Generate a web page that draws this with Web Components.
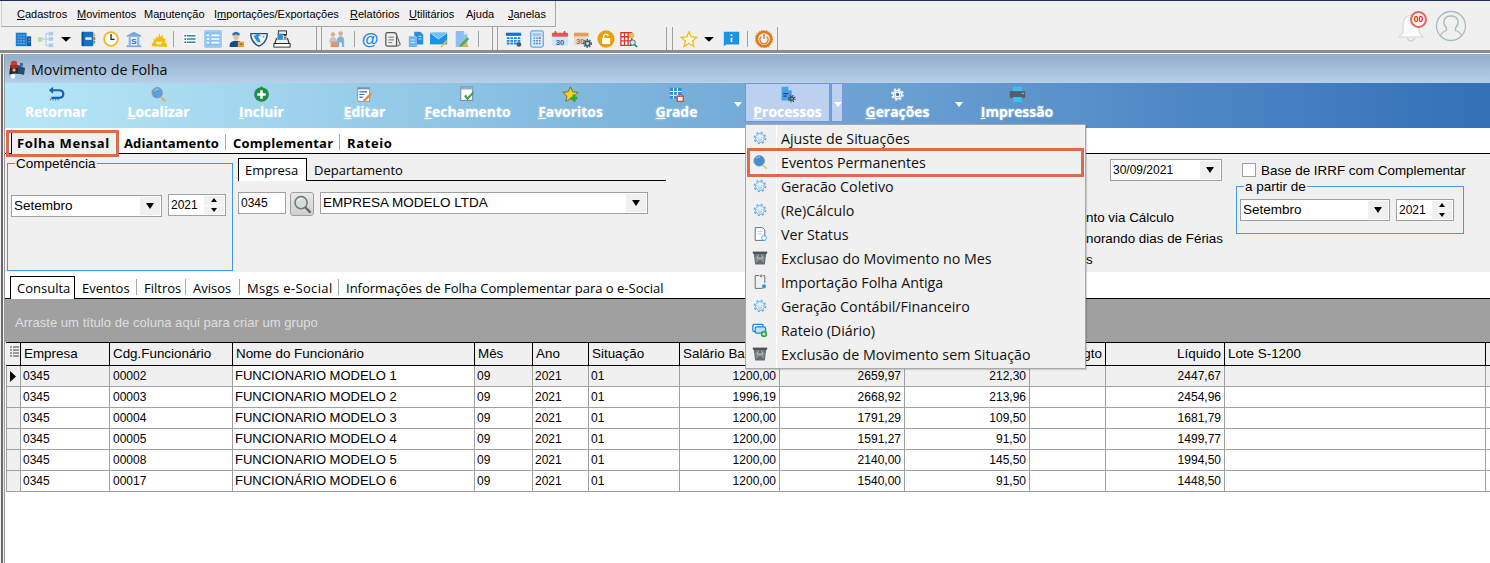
<!DOCTYPE html>
<html lang="pt-BR">
<head>
<meta charset="utf-8">
<title>Movimento de Folha</title>
<style>
  html, body { margin: 0; height: 100%; overflow: hidden; background: #f0f0f0; }
  body { font-family: "Liberation Sans", Arial, sans-serif; font-size: 12px; color: #000; }
</style>
</head>
<body>
<erp-app>
  <menu-bar>
    <menu-entry width="60" start="17"><u>C</u>adastros</menu-entry>
    <menu-entry width="67"><u>M</u>ovimentos</menu-entry>
    <menu-entry width="70">Ma<u>n</u>utenção</menu-entry>
    <menu-entry width="136">I<u>m</u>portações/Exportações</menu-entry>
    <menu-entry width="59"><u>R</u>elatórios</menu-entry>
    <menu-entry width="57"><u>U</u>tilitários</menu-entry>
    <menu-entry width="42">A<u>j</u>uda</menu-entry>
    <menu-entry width="47"><u>J</u>anelas</menu-entry>
  </menu-bar>
  <tool-bar></tool-bar>
  <div style="height:3px;background:#8c8c8c;border-bottom:1px solid #fff"></div>
  <app-window heading="Movimento de Folha">
    <rib-bon></rib-bon>
    <tab-strip kind="page">
      <tab-item width="108" pad="5" active><span style="font-weight:bold;letter-spacing:.6px">Folha Mensal</span></tab-item>
      <tab-item width="107" pad="5"><span style="font-weight:bold;letter-spacing:.1px">Adiantamento</span></tab-item>
      <tab-item width="114" pad="7"><span style="font-weight:bold;letter-spacing:.25px">Complementar</span></tab-item>
      <tab-item width="60" pad="7" last><span style="font-weight:bold;letter-spacing:.6px">Rateio</span></tab-item>
    </tab-strip>
    <folha-form></folha-form>
    <tab-strip kind="sub">
      <tab-item width="65" active>Consulta</tab-item>
      <tab-item width="62" pad="7">Eventos</tab-item>
      <tab-item width="49" pad="7">Filtros</tab-item>
      <tab-item width="54" pad="7">Avisos</tab-item>
      <tab-item width="99" pad="7"><span style="letter-spacing:.35px">Msgs e-Social</span></tab-item>
      <tab-item width="329" pad="7" last>Informações de Folha Complementar para o e-Social</tab-item>
    </tab-strip>
    <group-band>Arraste um título de coluna aqui para criar um grupo</group-band>
    <data-grid></data-grid>
  </app-window>
  <drop-menu>
    <menu-row icon="gear">Ajuste de Situações</menu-row>
    <menu-row icon="lens" marked>Eventos Permanentes</menu-row>
    <menu-row icon="gear">Geracão Coletivo</menu-row>
    <menu-row icon="gear">(Re)Cálculo</menu-row>
    <menu-row icon="status">Ver Status</menu-row>
    <menu-row icon="trash">Exclusao do Movimento no Mes</menu-row>
    <menu-row icon="import">Importação Folha Antiga</menu-row>
    <menu-row icon="gear">Geração Contábil/Financeiro</menu-row>
    <menu-row icon="rateio">Rateio (Diário)</menu-row>
    <menu-row icon="trash">Exclusão de Movimento sem Situação</menu-row>
  </drop-menu>
</erp-app>

<script>
const gearPath = `<circle cx="10" cy="10" r="5.4" fill="none" stroke="#5aaeea" stroke-width="1.1"/><circle cx="10" cy="10" r="7" fill="none" stroke="#5aaeea" stroke-width="1.8" stroke-dasharray="2.6 2.9"/><path d="M8 8.800v1.500M12 8.800v1.500M7.800 12q2.200 1.400 4.400 0" fill="none" stroke="#5aaeea" stroke-width=".9"/>`;

const icons = {
  building: `<rect x="2" y="3" width="12" height="15" fill="#1c7fd0"/><rect x="14" y="7" width="5" height="11" fill="#0f5fa8"/><path d="M4 6h8M4 9h8M4 12h8M4 15h8M16 10h2M16 13h2" stroke="#7cc0f0" stroke-dasharray="2 1"/>`,
  network: `<rect x="1" y="8" width="5" height="5" fill="#b6dcb0"/><path d="M6 10h4M10 4v13M10 4h3M10 10h3M10 17h3" stroke="#9cc8e8" fill="none"/><rect x="13" y="2" width="5" height="4" fill="#a4cdee"/><rect x="13" y="8" width="5" height="4" fill="#a4cdee"/><rect x="13" y="15" width="5" height="4" fill="#a4cdee"/>`,
  down: `<path d="M3 7h14l-7 7z" fill="#000"/>`,
  book: `<rect x="3" y="2" width="13" height="16" rx="1.5" fill="#1670c4"/><rect x="7" y="8" width="7" height="3" fill="#d9ecfa"/><rect x="3" y="2" width="2" height="16" fill="#0d4f94"/><path d="M16 4h2v3h-2z" fill="#e8b020"/><path d="M16 8h2v3h-2z" fill="#e05040"/><path d="M16 12h2v3h-2z" fill="#50b050"/>`,
  clock: `<circle cx="10" cy="10" r="7.6" fill="#fff" stroke="#f0bc1c" stroke-width="2"/><path d="M10 4.5V10.5H14" fill="none" stroke="#222" stroke-width="1.4"/>`,
  bank: `<path d="M2 6 10 2l8 4v1.5H2z" fill="#7aa8d8"/><rect x="4" y="8" width="12" height="9" fill="#8db8e4"/><rect x="2" y="17" width="16" height="2" fill="#7aa8d8"/><rect x="6.5" y="8" width="7" height="9" fill="#e8f2fb"/><text x="10" y="15.6" font-size="9" font-weight="bold" text-anchor="middle" fill="#2a6fb4" font-family="Liberation Sans">S</text>`,
  fire: `<path d="M2 18v-3l2-1V9l2 2 1-4 2 2 1-6 2 5 2-3 1 5 2-1v5l2 2v3z" fill="#f0bd14"/><path d="M6 13h8l-2 3H8z" fill="#fff3c4"/>`,
  list: `<rect x="2" y="3" width="16" height="14" fill="#fff"/><path d="M3 6h2M3 10h2M3 14h2" stroke="#0f6d80" stroke-width="2"/><path d="M6 6h11M6 10h11M6 14h11" stroke="#2a8aa0" stroke-width="2"/>`,
  list2: `<rect x="0" y="0" width="20" height="20" rx="2" fill="#a4cdf2"/><rect x="2" y="2" width="16" height="16" fill="#8cc0ee"/><path d="M3 6h3M3 10h3M3 14h3M8 6h9M8 10h9M8 14h9" stroke="#fff" stroke-width="1.8"/>`,
  worker: `<path d="M6 4q4-4 8 0v2H6z" fill="#1d6fc0"/><circle cx="10" cy="8" r="3" fill="#f0bd90"/><path d="M3 19v-3q1-4 7-4t6 3v4z" fill="#124a8c"/><rect x="12" y="13" width="7" height="6" fill="#e8a030"/><rect x="15" y="15" width="1.6" height="1.6" fill="#7a4a10"/>`,
  shield: `<path d="M1 4h18v3q-2 8-9 11Q3 15 1 7z" fill="none" stroke="#27527e" stroke-width="1.6"/><path d="M4 7l5-3 3 3 4 0-5 7-3-1z" fill="#2d8fdc"/><path d="M9 7h5l1 3-3 3" fill="#fff"/>`,
  register: `<rect x="6" y="1" width="9" height="4" fill="none" stroke="#222"/><rect x="5" y="4" width="6" height="7" fill="#2d8fdc"/><path d="M12 6h3M12 8h3M12 10h3" stroke="#222"/><path d="M4 9 2 15h16l-2-6" fill="none" stroke="#222" stroke-width="1.2"/><rect x="1" y="15" width="18" height="4" fill="#fff" stroke="#222"/>`,
  people: `<circle cx="5.5" cy="5" r="2.6" fill="#d8b090"/><path d="M1 14q0-6 4.5-6T10 14z" fill="#c4c4c4"/><circle cx="14" cy="4" r="2.6" fill="#d8b090"/><path d="M10 19V10q1-3 4-3t4 3v9h-2.5v-5h-3v5z" fill="#7db2e0"/><rect x="3" y="13" width="7" height="6" fill="#e09468"/>`,
  at: `<text x="10" y="16.5" font-size="19" font-weight="bold" text-anchor="middle" fill="#1c85e0" font-family="Liberation Sans">@</text>`,
  docs: `<path d="M2 5q0-2 2-2h8l2 2v13H4q-2 0-2-2z" fill="#eee" stroke="#555" stroke-width="1.4"/><path d="M5 8h6M5 11h6M5 14h4" stroke="#666"/><path d="M13 3l5 13-3 2" fill="none" stroke="#777" stroke-width="1.4"/>`,
  bluedocs: `<path d="M2 7h7l2 2v10H2z" fill="#6cb4ee"/><path d="M8 2h7l3 3v11h-7V8L8 6z" fill="#2d8fdc"/><path d="M4 11h5M4 14h5M13 7h3M13 10h3" stroke="#d4ebfb"/>`,
  mail: `<rect x="0" y="3" width="19" height="13" fill="#1d93e8"/><path d="M0 3l9.5 7L19 3" fill="#6cc0f6" stroke="#d8eefc" stroke-width=".8"/><path d="M12 18l6-7 1.6 1.4-6 6.6-2 .6z" fill="#f0bc30"/>`,
  pendoc: `<path d="M3 1h9l4 4v14H3z" fill="#8cc0ee"/><path d="M12 1l4 4h-4z" fill="#d4ebfb"/><path d="M8 16l8-8 2 2-8 8-3 1z" fill="#64a830"/><path d="M9 19l6-3 3 3z" fill="#f0b040"/>`,
  cal: `<rect x="1" y="3" width="17" height="3.5" fill="#1670c4"/><path d="M2 8h3v2H2zM6 8h3v2H6zM10 8h3v2h-3zM14 8h3v2h-3zM2 11h3v2H2zM6 11h3v2H6zM10 11h3v2h-3zM14 11h3v2h-3zM2 14h3v2H2zM6 14h3v2H6zM10 14h3v2h-3z" fill="#1c85e0"/><circle cx="15.5" cy="16" r="2.6" fill="#3d5a70"/>`,
  calc: `<rect x="3" y="1" width="14" height="18" rx="2" fill="#dcebf8" stroke="#6aa8dc" stroke-width="1.4"/><rect x="5" y="3.5" width="10" height="3.5" fill="#9cc8ee"/><path d="M6 9h2M9 9h2M12 9h2M6 12h2M9 12h2M12 12h2M6 15h2M9 15h2M12 15h2" stroke="#4a8ccc" stroke-width="1.6"/><rect x="12" y="8" width="2" height="2" fill="#e05a50"/>`,
  cal30: `<rect x="1" y="3" width="18" height="15" rx="2" fill="#cfe5f8"/><rect x="1" y="3" width="18" height="4.5" rx="1" fill="#e25a4e"/><path d="M5 1v4M15 1v4" stroke="#c84a40" stroke-width="1.6"/><text x="10" y="16.2" font-size="8.4" font-weight="bold" text-anchor="middle" fill="#1c65b4" font-family="Liberation Sans">30</text>`,
  calgear: `<rect x="0" y="3" width="16" height="14" rx="2" fill="#ddd"/><rect x="0" y="3" width="16" height="4" fill="#e89a5a"/><text x="7" y="15.4" font-size="8" font-weight="bold" text-anchor="middle" fill="#d05a4a" font-family="Liberation Sans">30</text><circle cx="15" cy="15" r="2.6" fill="none" stroke="#3d5a70" stroke-width="2"/><circle cx="15" cy="15" r="4.4" fill="none" stroke="#3d5a70" stroke-width="1.4" stroke-dasharray="1.6 1.6"/>`,
  lock: `<circle cx="10" cy="10" r="9.6" fill="#e8a00c"/><rect x="5.6" y="9" width="9" height="6.5" rx=".8" fill="#fff"/><path d="M7.5 9V6.5a2.6 2.6 0 0 1 5 0" fill="none" stroke="#fff" stroke-width="1.6"/>`,
  gridlens: `<rect x="1" y="3" width="12" height="14" fill="#fff"/><path d="M1 3h12v14H1zM1 7.5h12M1 12h12M5 3v14M9 3v14" fill="none" stroke="#d8372c" stroke-width="1.5"/><circle cx="13" cy="6" r="3" fill="#f0c040"/><circle cx="14" cy="14" r="3" fill="#cfe5f8" stroke="#3d5a70"/><path d="M16 16l3 3" stroke="#3d5a70" stroke-width="1.6"/>`,
  star: `<path d="M10 2l2.5 5.6 6 .6-4.5 4 1.4 6L10 15l-5.400 3.200 1.400-6-4.500-4 6-.6z" fill="#fffbe8" stroke="#f2bc1a" stroke-width="1.5"/>`,
  info: `<path d="M1 2h18v15H4l-3 2z" fill="#1d93e8"/><path d="M10 5v2M10 9v5" stroke="#fff" stroke-width="2"/>`,
  power: `<circle cx="10" cy="10" r="8" fill="none" stroke="#e07a1c" stroke-width="3" /><circle cx="10" cy="10" r="9.700" fill="none" stroke="#e07a1c" stroke-width="1" stroke-dasharray="1.500 1.500"/><path d="M6.800 7.500a4.500 4.500 0 1 0 6.400 0M10 4.500v5.500" fill="none" stroke="#e07a1c" stroke-width="1.500"/>`,
  back: `<path d="M3 5h10q5 0 5 4.500T13 14H4" fill="none" stroke="#1464b4" stroke-width="2.600"/><path d="M1 5l5-4v8z" fill="#1464b4"/><path d="M3 15v2M6 15v2M9 15v2M12 15v2" stroke="#1464b4"/>`,
  find: `<circle cx="8.500" cy="8" r="6" fill="#58a0dc" stroke="#8a9cb0" stroke-width="1.400"/><path d="M5 6q2-3 5-2" stroke="#bcdcf6" fill="none"/><path d="M13 13l5 5" stroke="#d8b050" stroke-width="2"/>`,
  greylens: `<circle cx="8.500" cy="8" r="6.400" fill="#d4dcdc" stroke="#6e7878" stroke-width="1.600"/><path d="M5 6q2-3 5-2" stroke="#fff" fill="none"/><path d="M13 13l5.500 5.500" stroke="#606868" stroke-width="2.400"/>`,
  add: `<circle cx="10" cy="10" r="8.600" fill="#1d8f46"/><circle cx="10" cy="1.400" r="1" fill="#1d8f46"/><path d="M10 5v10M5 10h10" stroke="#fff" stroke-width="3"/>`,
  edit: `<rect x="2" y="2" width="14" height="16" fill="#fff" stroke="#7a94b8"/><path d="M2 2h14v2H2z" fill="#7a94b8"/><path d="M4 7h9M4 10h6M4 13h4" stroke="#2a6fb4" stroke-width="1.400"/><path d="M9 16l8-8 2 2-8 8-3 .6z" fill="#e89030"/>`,
  close: `<rect x="2" y="1" width="14" height="16" fill="#fff" stroke="#7a94b8" stroke-width="1.400"/><path d="M2 1h14v3H2z" fill="#8cacd0"/><path d="M6 12l4 5 8-9-2-1-6 6-2-3z" fill="#3fa548"/>`,
  favs: `<path d="M10 1l2.600 5.800 6.400.7-4.800 4.300 1.300 6.300L10 15l-5.500 3.100 1.300-6.300L1 7.500l6.400-.7z" fill="#f4d320" stroke="#5a4c10" stroke-width=".8"/><path d="M14 10v8M10 14h8" stroke="#2fa83a" stroke-width="3"/>`,
  grade: `<path d="M2 2h14v13H2z" fill="#2d8fdc"/><path d="M2 6.500h14M2 11h14M6.500 2v13M11 2v13" stroke="#fff" stroke-width="1.200"/><rect x="11" y="12" width="7" height="6" fill="#fff" stroke="#e2452c" stroke-width="1.600"/><path d="M13 12v-2h3v2" fill="none" stroke="#e2452c"/>`,
  proc: `<path d="M3 1h8l4 4v12H3z" fill="#4a9ee4"/><path d="M11 1l4 4h-4z" fill="#bcdcf6"/><path d="M5 9h6M5 12h4" stroke="#124a8c" stroke-width="1.400"/><circle cx="15" cy="15" r="2" fill="none" stroke="#2f4a60" stroke-width="1.600"/><circle cx="15" cy="15" r="3.800" fill="none" stroke="#2f4a60" stroke-width="1.400" stroke-dasharray="1.500 1.500"/>`,
  gen: `<circle cx="10" cy="10" r="4" fill="#fff"/><circle cx="10" cy="10" r="5.500" fill="none" stroke="#fff" stroke-width="2"/><circle cx="10" cy="10" r="7.400" fill="none" stroke="#e8f2fb" stroke-width="2.200" stroke-dasharray="3 2.800"/><circle cx="10" cy="10" r="2.200" fill="#3a7cc0"/>`,
  print: `<rect x="5" y="1" width="10" height="5" fill="#38c4ee"/><rect x="1" y="6" width="18" height="8" fill="#555f6c"/><rect x="5" y="13" width="10" height="6" fill="#38c4ee"/><rect x="15.500" y="8" width="1.500" height="1.500" fill="#bfe6f6"/>`,
  gear: gearPath,
  lens: `<circle cx="9" cy="8.500" r="6.600" fill="#4290d0" stroke="#7a90a8"/><path d="M5 6q2-3 5-2.400" stroke="#bcdcf6" fill="none"/><path d="M13.500 13.500l5 5" stroke="#e0c060" stroke-width="2"/>`,
  status: `<path d="M4 2h9l3 3v13H4z" fill="#fff" stroke="#55606c" stroke-width="1.100"/><path d="M7 7h6M7 10h6" stroke="#b8c4d0"/><circle cx="15" cy="15" r="3" fill="#fff" stroke="#2f9be8"/>`,
  trash: `<path d="M2 3h16l-2 15H4z" fill="#666c70"/><rect x="1" y="2" width="18" height="2.600" fill="#484e54"/><path d="M5 7l10 8M15 7L5 15M8 5l-2 8M12 5l2 8M4 10l12 0" stroke="#c8ccd0" stroke-width=".8"/>`,
  import: `<path d="M4 2h5M14 2h2v9M4 2v16h9" fill="none" stroke="#55606c" stroke-width="1.100"/><circle cx="11.500" cy="2.500" r="1.200" fill="none" stroke="#55606c"/><circle cx="15" cy="15.500" r="2.600" fill="#2f9be8"/>`,
  rateio: `<rect x="1" y="3" width="13" height="9" rx="2" fill="#fff" stroke="#1c85e0" stroke-width="1.600"/><rect x="4" y="6" width="13" height="8" rx="2" fill="#bfe2f8" stroke="#1c85e0" stroke-width="1.600"/><circle cx="15" cy="15" r="4" fill="#2fa84a"/><path d="M15 13v4M13 15h4" stroke="#fff" stroke-width="1.200"/>`,
  logo: `<circle cx="7" cy="4" r="3.200" fill="#d0392c"/><path d="M3 5h8v3H3z" fill="#a82a20"/><path d="M3 8h8l1 8H2z" fill="#2e2422"/><circle cx="7" cy="10" r="1.800" fill="#d8a080"/><path d="M11 5l7 3-1 7-6-1z" fill="#2a4a70"/><path d="M13 3h3v3h-3z" fill="#3f6a9a"/><path d="M1 15q6-3 16 0l-2 4H3z" fill="#a4c6e8"/><circle cx="6" cy="16.500" r="2.200" fill="#fff"/>`
};

class AppIcon extends HTMLElement {
  connectedCallback() {
    const size = this.getAttribute("size") || 18;
    const shadow = this.shadowRoot || this.attachShadow({ mode: "open" });
    shadow.innerHTML = `
      <style>:host { display: inline-flex; width: ${size}px; height: ${size}px; flex: none; } svg { display: block; width: 100%; height: 100%; }</style>
      <svg viewBox="0 0 20 20">${icons[this.getAttribute("name")] || ""}</svg>`;
  }
}

class ErpApp extends HTMLElement {
  constructor() {
    super();
    this.attachShadow({ mode: "open" }).innerHTML = `
      <style>:host { display: block; position: relative; width: 1490px; height: 563px; overflow: hidden; border-top: 1px solid #1c2f4f; box-sizing: border-box; }</style>
      <slot></slot>`;
  }
}

class MenuBar extends HTMLElement {
  constructor() {
    super();
    this.attachShadow({ mode: "open" }).innerHTML = `
      <style>
        :host { display: flex; width: 555px; height: 26px; box-sizing: border-box; margin-left: 1px; padding-left: 15px; border: 1px solid #a8a8a8; border-top: 0; border-left-color: #d0d0d0; align-items: center; font-size: 11px; }
      </style>
      <slot></slot>`;
  }
}

class MenuEntry extends HTMLElement {
  constructor() {
    super();
    this.attachShadow({ mode: "open" }).innerHTML = `<style>:host { display: block; flex: none; white-space: nowrap; padding-top: 1px; }</style><slot></slot>`;
  }
  connectedCallback() {
    this.style.width = this.getAttribute("width") + "px";
  }
}

class ToolBar extends HTMLElement {
  connectedCallback() {
    const items = [["building", 23], ["network", 46], ["down", 66, 14], ["book", 88], ["clock", 111], ["bank", 134], ["fire", 159],
      ["|", 173], ["list", 190, 16], ["list2", 213], ["worker", 236], ["shield", 259], ["register", 282], ["||", 316], ["||", 321],
      ["people", 337], ["|", 354], ["at", 370], ["docs", 393], ["bluedocs", 416], ["mail", 439], ["pendoc", 462], ["|", 478], ["||", 492], ["||", 497],
      ["cal", 514], ["calc", 537], ["cal30", 560], ["calgear", 583], ["lock", 606], ["gridlens", 629], ["||", 666], ["||", 672],
      ["star", 689], ["down", 709, 14], ["info", 731, 17], ["|", 747], ["power", 764], ["||", 777]];
    let at = 0;
    let html = "";
    for (const [name, center, size] of items) {
      if (name[0] === "|") {
        const tall = name === "||";
        html += `<i class="${tall ? "tall" : "tick"}" style="margin-left:${center - at}px"></i>`;
        at = center + 1;
      } else {
        const w = size || 18;
        html += `<app-icon name="${name}" size="${w}" style="margin-left:${center - w / 2 - at}px"></app-icon>`;
        at = center + w / 2;
      }
    }
    this.attachShadow({ mode: "open" }).innerHTML = `
      <style>
        :host { display: flex; height: 23px; box-sizing: border-box; align-items: center; position: relative; }
        i { display: block; width: 1px; flex: none; background: #a0a0a0; }
        .tall { height: 23px; }
        .tick { height: 16px; }
      </style>
      ${html}
      <notify-area></notify-area>`;
  }
}

class NotifyArea extends HTMLElement {
  constructor() {
    super();
    this.attachShadow({ mode: "open" }).innerHTML = `
      <style>
        :host { position: absolute; left: 1396px; top: -19px; width: 72px; height: 36px; display: block; }
        svg { position: absolute; left: 0; top: 0; }
        b { position: absolute; left: 14px; top: 3px; width: 17px; height: 17px; border-radius: 50%; box-sizing: border-box; border: 2px solid #e8655c; background: #fff; color: #e01010; font: bold 8.500px/13px "Liberation Sans", sans-serif; text-align: center; }
      </style>
      <svg width="72" height="36" viewBox="0 0 72 36">
        <path d="M15 7q-8 1-8 11v6l-4 5h24l-4-5v-6q0-10-8-11" fill="#fbfbfb" stroke="#d8d8d8" stroke-width="1.200"/>
        <path d="M11 30q4 6 8 0" fill="none" stroke="#d0d0d0" stroke-width="1.400"/>
        <g fill="none" stroke="#a8bcbc" stroke-width="1.300">
          <circle cx="55" cy="18" r="14.500"/>
          <path d="M44.500 28q1-4 6-5.500v-2.500q-3-3-2.500-7 1-5 7-5t7 5q.5 4-2.500 7v2.500q5 1.500 6 5.500"/>
        </g>
      </svg>
      <b>00</b>`;
  }
}

class AppWindow extends HTMLElement {
  connectedCallback() {
    this.attachShadow({ mode: "open" }).innerHTML = `
      <style>
        :host { display: block; box-sizing: border-box; height: 510px; padding-left: 5px; position: relative; background: linear-gradient(90deg, #f0f0f0 0 1px, #6a6a6a 1px 3px, #f0f0f0 3px 5px); }
        .body { background: #fff; height: 100%; box-shadow: -1px 0 0 #9a9a9a; }
        .title { height: 29px; box-sizing: border-box; display: flex; align-items: center; gap: 4px; padding: 2px 0 0 2px; background: linear-gradient(#91adcc, #b7cfe8); font: 14.300px "Open Sans", "Noto Sans", sans-serif; color: #0a0a0a; }
      </style>
      <div class="body">
        <div class="title"><app-icon name="logo" size="20"></app-icon><span>${this.getAttribute("heading")}</span></div>
        <slot></slot>
      </div>`;
  }
}

class RibBon extends HTMLElement {
  connectedCallback() {
    const items = [["back", "Retornar", 102, ""], ["find", "Localizar", 103, "L"], ["add", "Incluir", 103, "I"], ["edit", "Editar", 103, "E"],
      ["close", "Fechamento", 103, "F"], ["favs", "Favoritos", 103, "F"], ["grade", "Grade", 109, "G", "arrow"],
      ["proc", "Processos", 85, "P", "hot"], ["gen", "Gerações", 109, "G", "arrow"], ["print", "Impressão", 102, "I"]];
    const label = (text, key) => key ? `<u>${key}</u>${text.slice(1)}` : text;
    const html = items.map(([icon, text, w, key, mode]) => {
      const btn = `<div class="btn ${mode === "hot" ? "hot" : ""}" style="width:${w}px"><div class="pic"><app-icon name="${icon}" size="${icon === "gen" ? 15 : 17}"></app-icon></div><span>${label(text, key)}</span></div>`;
      if (mode === "hot") return btn + `<div class="drop hot"><em></em></div>`;
      if (mode === "arrow") return btn + `<div class="drop"><em></em></div>`;
      return btn;
    }).join("");
    this.attachShadow({ mode: "open" }).innerHTML = `
      <style>
        :host { display: flex; height: 45px; box-sizing: border-box; background: linear-gradient(90deg, #b7e6f7 0%, #a5d8ef 15%, #7cb4dc 42%, #6a9fd2 60%, #5089c6 78%, #3470b8 100%); }
        .btn { height: 39px; box-sizing: border-box; flex: none; display: flex; flex-direction: column; align-items: center; padding-top: 3px; color: #fff; font: bold 13.900px "Open Sans", sans-serif; text-shadow: 0 0 2px rgba(215,235,250,.85); }
        .pic { height: 17px; display: flex; align-items: center; }
        .btn span { line-height: 18px; white-space: nowrap; }
        .btn.hot, .drop.hot { background: #bcd0ef; box-shadow: inset 0 0 0 1px #7b93d8; }
        .drop { width: 14px; height: 39px; flex: none; position: relative; }
        .drop.hot { width: 12px; margin-left: 1px; }
        em { position: absolute; left: 3px; top: 19px; border: 4px solid transparent; border-top: 5px solid #fff; border-bottom: 0; }
      </style>${html}`;
  }
}

class TabStrip extends HTMLElement {
  connectedCallback() {
    const kind = this.getAttribute("kind");
    const page = kind === "page";
    const small = kind === "small";
    this.attachShadow({ mode: "open" }).innerHTML = `
      <style>
        :host { display: flex; box-sizing: border-box; position: relative; align-items: flex-end;
          background: ${small ? "transparent" : "#fff"};
          height: ${page ? 26 : small ? 25 : 27}px;
          padding-left: ${page ? 6 : small ? 0 : 5}px;
          border-bottom: 1px solid #000;
          font: 13px 'Open Sans', sans-serif;
          --tab-active: ${page ? "#f0f0f0" : "#fff"};
          --tab-top: ${page ? "transparent" : "#000"};
          --tab-h: 23px; }
        .mark { position: absolute; left: 1px; top: 2px; width: 113px; height: 27px; border: 3px solid #dd6a4b; box-sizing: border-box; z-index: 3; pointer-events: none; }
      </style>
      <slot></slot>${page ? '<div class="mark"></div>' : ""}`;
  }
}

class TabItem extends HTMLElement {
  connectedCallback() {
    const active = this.hasAttribute("active");
    const last = this.hasAttribute("last");
    const pad = this.getAttribute("pad") || 6;
    this.attachShadow({ mode: "open" }).innerHTML = `
      <style>
        :host { display: flex; box-sizing: border-box; flex: none; align-items: center; height: var(--tab-h); width: ${this.getAttribute("width")}px; padding: ${active ? "0 0 1px" : "3px 0 0"} ${pad}px; white-space: nowrap; position: relative; top: ${active ? 1 : 0}px;
          ${active ? "background: var(--tab-active); border: 1px solid var(--tab-top); border-left-color: #000; border-bottom: 0;" : ""} }
        :host::after { content: ""; position: absolute; right: 0; top: 4px; bottom: 3px; width: 1px; background: ${active || last ? "transparent" : "#a8a8a8"}; }
      </style>
      <slot></slot>`;
  }
}

class ComboBox extends HTMLElement {
  connectedCallback() {
    const h = this.getAttribute("height") || 22;
    const w = this.getAttribute("width");
    const fs = this.getAttribute("font") || 13.5;
    this.attachShadow({ mode: "open" }).innerHTML = `
      <style>
        :host { display: flex; flex: none; box-sizing: border-box; width: ${w}px; height: ${h}px; background: #fff; border: 1px solid #a0a0a0; align-items: center; padding-left: 2px; font: ${fs}px "Liberation Sans", sans-serif; position: relative; }
        span { flex: 1; white-space: nowrap; margin-top: -1px; }
        div { width: 20px; align-self: stretch; margin: 1px; background: #f0f0f0; display: flex; align-items: center; justify-content: center; }
        em { border: 5px solid transparent; border-top: 6px solid #000; border-bottom: 0; border-left-width: 4.500px; border-right-width: 4.500px; }
      </style>
      <span><slot></slot></span><div><em></em></div>`;
  }
}

class SpinBox extends HTMLElement {
  connectedCallback() {
    this.attachShadow({ mode: "open" }).innerHTML = `
      <style>
        :host { display: flex; flex: none; box-sizing: border-box; width: 58px; height: 22px; background: #fff; border: 1px solid #a0a0a0; align-items: center; padding-left: 2px; font: 12px "Liberation Sans", sans-serif; }
        span { flex: 1; }
        div { width: 20px; align-self: stretch; margin: 1px; display: flex; flex-direction: column; gap: 1px; background: #fff; }
        i { flex: 1; background: #f0f0f0; display: flex; align-items: center; justify-content: center; }
        .u { border: 3px solid transparent; border-bottom: 4px solid #000; border-top: 0; }
        .d { border: 3px solid transparent; border-top: 4px solid #000; border-bottom: 0; }
      </style>
      <span><slot></slot></span><div><i><b class="u"></b></i><i><b class="d"></b></i></div>`;
  }
}

class GroupBox extends HTMLElement {
  connectedCallback() {
    this.attachShadow({ mode: "open" }).innerHTML = `
      <style>
        :host { display: block; flex: none; box-sizing: border-box; position: relative; border: 1px solid #3c9af0; }
        label { position: absolute; left: 7px; top: -7px; background: #f0f0f0; padding: 0 1px; font: 13.500px/14px "Liberation Sans", sans-serif; white-space: nowrap; }
        .row { display: flex; align-items: flex-start; gap: 6px; }
      </style>
      <label>${this.getAttribute("label")}</label>
      <div class="row"><slot></slot></div>`;
  }
}

class FolhaForm extends HTMLElement {
  constructor() {
    super();
    this.attachShadow({ mode: "open" }).innerHTML = `
      <style>
        :host { display: flex; height: 118px; box-sizing: border-box; padding: 9px 0 0 2px; background: #f0f0f0; font: 13.400px "Liberation Sans", sans-serif; align-items: flex-start; }
        .comp { width: 226px; height: 108px; padding: 30px 0 0 3px; margin-right: 5px; }
        .comp combo-box { margin-top: 1px; }
        .emp { width: 428px; flex: none; margin-top: -7px; }
        .row { display: flex; gap: 4px; margin-top: 11px; align-items: flex-start; }
        .lens { width: 24px; height: 24px; box-sizing: border-box; flex: none; border: 1px solid #a0a0a0; border-radius: 3px; background: linear-gradient(#e8e8e8, #cfcfcf); display: flex; align-items: center; justify-content: center; }
        .code { width: 48px; height: 22px; box-sizing: border-box; background: #fff; border: 1px solid #a0a0a0; padding-left: 2px; line-height: 20px; font-size: 12px; flex: none; }
        .clip { flex: none; margin-left: 420px; width: 150px; margin-top: -4px; }
        .clip combo-box { margin-left: 24px; }
        .clip p { margin: 0; line-height: 21px; white-space: nowrap; }
        .lines { margin-top: 26px; }
        .irrf { flex: none; margin-top: -4px; }
        .chk { display: flex; align-items: center; gap: 5px; height: 18px; margin: 2px 0 7px 6px; white-space: nowrap; }
        .chk i { width: 14px; height: 14px; box-sizing: border-box; background: #fff; border: 1px solid #a0a0a0; display: block; }
        .base { width: 228px; height: 48px; padding: 12px 0 0 3px; }
      </style>
      <group-box class="comp" label="Competência">
        <combo-box width="151">Setembro</combo-box><spin-box>2021</spin-box>
      </group-box>
      <div class="emp">
        <tab-strip kind="small">
          <tab-item width="69" active>Empresa</tab-item>
          <tab-item width="359" pad="7" last>Departamento</tab-item>
        </tab-strip>
        <div class="row">
          <div class="code">0345</div>
          <div class="lens"><app-icon name="greylens" size="19"></app-icon></div>
          <combo-box width="328" style="margin-left:2px">EMPRESA MODELO LTDA</combo-box>
        </div>
      </div>
      <div class="clip">
        <combo-box width="112" font="12">30/09/2021</combo-box>
        <div class="lines"><p>nto via Cálculo</p><p>norando dias de Férias</p><p>s</p></div>
      </div>
      <div class="irrf">
        <div class="chk"><i></i><span>Base de IRRF com Complementar</span></div>
        <group-box class="base" label="a partir de">
          <combo-box width="150">Setembro</combo-box><spin-box>2021</spin-box>
        </group-box>
      </div>`;
  }
}

class GroupBand extends HTMLElement {
  constructor() {
    super();
    this.attachShadow({ mode: "open" }).innerHTML = `
      <style>:host { display: flex; align-items: center; height: 43px; box-sizing: border-box; padding: 4px 0 0 10px; background: #a0a0a0; color: #dedede; font: 13.100px "Liberation Sans", sans-serif; }</style>
      <slot></slot>`;
  }
}

class DataGrid extends HTMLElement {
  connectedCallback() {
    const cols = [15, 89, 123, 242, 58, 56, 91, 100, 125, 125, 76, 119, 261, 5];
    const head = ["", "Empresa", "Cdg.Funcionário", "Nome do Funcionário", "Mês", "Ano", "Situação", "Salário Base", "", "", "Dt. Pgto", "Líquido", "Lote S-1200", ""];
    const rows = [
      ["00002", "FUNCIONARIO MODELO 1", "1200,00", "2659,97", "212,30", "2447,67"],
      ["00003", "FUNCIONARIO MODELO 2", "1996,19", "2668,92", "213,96", "2454,96"],
      ["00004", "FUNCIONARIO MODELO 3", "1200,00", "1791,29", "109,50", "1681,79"],
      ["00005", "FUNCIONARIO MODELO 4", "1200,00", "1591,27", "91,50", "1499,77"],
      ["00008", "FUNCIONARIO MODELO 5", "1200,00", "2140,00", "145,50", "1994,50"],
      ["00017", "FUNCIONÁRIO MODELO 6", "1200,00", "1540,00", "91,50", "1448,50"]
    ];
    const right = new Set([7, 8, 9, 11]);
    const headRight = new Set([10, 11]);
    let html = head.map((h, i) => `<div class="h${headRight.has(i) ? " r" : ""}">${i === 0 ? '<svg width="11" height="13" viewBox="0 0 11 13"><path d="M1 2h2M1 5h2M1 8h2M1 11h2M4 2h6M4 5h6M4 8h6M4 11h6" stroke="#444"/></svg>' : h}</div>`).join("");
    rows.forEach((r, n) => {
      const vals = ["", "0345", r[0], r[1], "09", "2021", "01", r[2], r[3], r[4], "", r[5], "", ""];
      html += vals.map((v, i) => {
        let cls = i === 0 ? "ind" : n === 0 && i !== 3 ? "sel" : "";
        if (i === 3) cls += " nm";
        if (i === 2) cls += " cd";
        if (right.has(i)) cls += " r";
        if (i === 0 && n === 0) v = '<svg width="8" height="11" viewBox="0 0 8 11"><path d="M1 0l6 5.500-6 5.500z" fill="#000"/></svg>';
        return `<div class="${cls}">${v}</div>`;
      }).join("");
    });
    this.attachShadow({ mode: "open" }).innerHTML = `
      <style>
        :host { display: grid; grid-template-columns: ${cols.map((c) => c + "px").join(" ")}; grid-template-rows: 24px; grid-auto-rows: 21px; background: #fff; font: 12px "Liberation Sans", sans-serif; width: 1485px; margin-left: 1px; }
        div { box-sizing: border-box; border-right: 1px solid #a0a0a0; border-bottom: 1px solid #a0a0a0; padding: 0 3px 0 2px; line-height: 20px; white-space: nowrap; overflow: hidden; }
        .h { background: #f0f0f0; border-top: 1px solid #000; border-bottom-color: #000; border-right-color: #000; line-height: 22px; padding: 0 3px; font-size: 13.400px; }
        .h:first-child { border-left: 1px solid #000; padding: 4px 0 0 2px; line-height: 0; }
        .h:nth-child(11) { padding-right: 4px; }
        .r { text-align: right; }
        .ind { background: #f0f0f0; display: flex; align-items: center; padding-left: 2px; border-left: 1px solid #a0a0a0; }
        .sel { background: #f0f0f0; }
        .nm { font-size: 13px; }
        .cd { padding-left: 3px; }
      </style>${html}`;
  }
}

class DropMenu extends HTMLElement {
  constructor() {
    super();
    this.attachShadow({ mode: "open" }).innerHTML = `
      <style>
        :host { position: absolute; left: 745px; top: 123px; width: 341px; height: 245px; box-sizing: border-box; padding: 1px 0 0 1px; background: linear-gradient(90deg, #f0f0f0 0 30px, #fff 30px 31px, #f0f0f0 31px); border: 1px solid #a8a8a8; box-shadow: 1px 1px 1px rgba(0,0,0,.15); font: 14.250px "Open Sans", sans-serif; color: #111; }
      </style>
      <slot></slot>`;
  }
}

class MenuRow extends HTMLElement {
  connectedCallback() {
    const marked = this.hasAttribute("marked");
    this.attachShadow({ mode: "open" }).innerHTML = `
      <style>
        :host { display: flex; align-items: center; height: 24px; position: relative; white-space: nowrap; }
        app-icon { margin: 0 13px 0 5px; }
        .mark { position: absolute; left: 0; right: 1px; top: -2px; bottom: -3px; border: 3px solid #dd6a4b; box-sizing: border-box; }
      </style>
      <app-icon name="${this.getAttribute("icon")}" size="16"></app-icon><slot></slot>${marked ? '<div class="mark"></div>' : ""}`;
  }
}

customElements.define("app-icon", AppIcon);
customElements.define("erp-app", ErpApp);
customElements.define("menu-bar", MenuBar);
customElements.define("menu-entry", MenuEntry);
customElements.define("tool-bar", ToolBar);
customElements.define("notify-area", NotifyArea);
customElements.define("app-window", AppWindow);
customElements.define("rib-bon", RibBon);
customElements.define("tab-strip", TabStrip);
customElements.define("tab-item", TabItem);
customElements.define("combo-box", ComboBox);
customElements.define("spin-box", SpinBox);
customElements.define("group-box", GroupBox);
customElements.define("folha-form", FolhaForm);
customElements.define("group-band", GroupBand);
customElements.define("data-grid", DataGrid);
customElements.define("drop-menu", DropMenu);
customElements.define("menu-row", MenuRow);
</script>
</body>
</html>
